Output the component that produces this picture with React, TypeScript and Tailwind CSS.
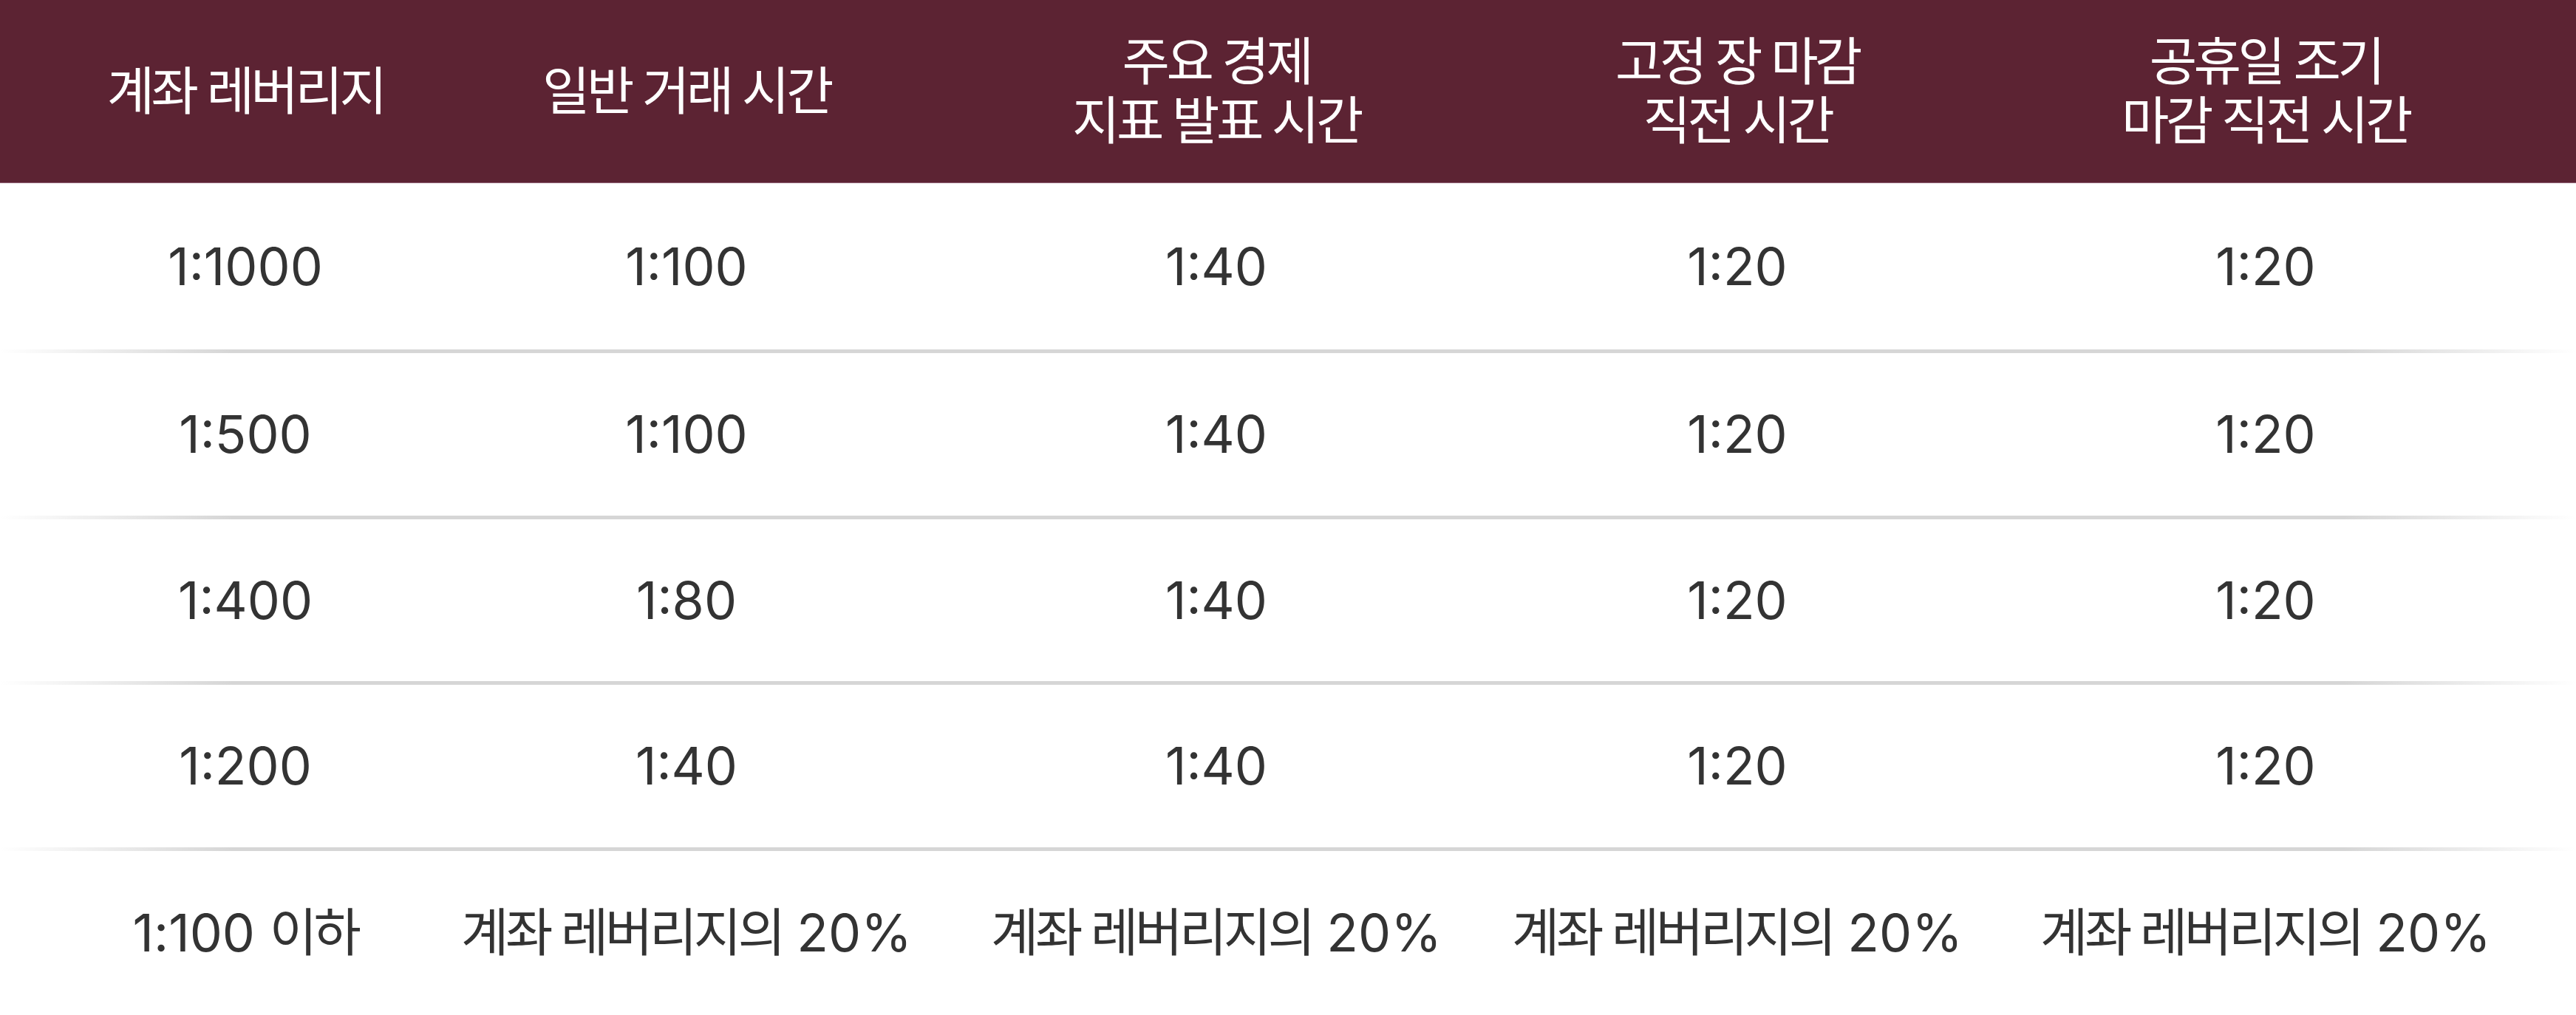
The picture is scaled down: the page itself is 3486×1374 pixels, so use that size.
import React from 'react'

// Hangul runs are set a little tighter than the Latin digits
function Txt({ text }: { text: string }) {
  const parts = text.split(/([가-힣]+(?: [가-힣]+)*)/)
  return (
    <>
      {parts.map((p, i) =>
        /[가-힣]/.test(p) ? (
          <span key={i} className="tracking-[-4.5px]">
            {p}
          </span>
        ) : (
          <React.Fragment key={i}>{p}</React.Fragment>
        ),
      )}
    </>
  )
}

const headers: string[][] = [
  ['계좌 레버리지'],
  ['일반 거래 시간'],
  ['주요 경제', '지표 발표 시간'],
  ['고정 장 마감', '직전 시간'],
  ['공휴일 조기', '마감 직전 시간'],
]

const rows: string[][] = [
  ['1:1000', '1:100', '1:40', '1:20', '1:20'],
  ['1:500', '1:100', '1:40', '1:20', '1:20'],
  ['1:400', '1:80', '1:40', '1:20', '1:20'],
  ['1:200', '1:40', '1:40', '1:20', '1:20'],
  ['1:100 이하', '계좌 레버리지의 20%', '계좌 레버리지의 20%', '계좌 레버리지의 20%', '계좌 레버리지의 20%'],
]

const rowHeights = ['h-[225px]', 'h-[220px]', 'h-[219px]', 'h-[220px]', 'h-[222px]']

const cols = 'grid grid-cols-[476px_718px_716px_694px_736px] pl-[94px] pr-[52px]'

export default function App() {
  return (
    <div className="w-[3486px] bg-white font-[Inter,'Noto_Sans_CJK_KR',sans-serif] text-[70px] leading-[80px]">
      {/* Header */}
      <div className={`${cols} h-[248px] items-center border-b border-[#94687a] bg-[#5c2333] text-white`}>
        {headers.map((lines, i) => (
          <div key={i} className="flex flex-col items-center whitespace-nowrap">
            {lines.map((l, j) => (
              <div key={j}>
                <Txt text={l} />
              </div>
            ))}
          </div>
        ))}
      </div>

      {/* Body */}
      {rows.map((row, r) => (
        <div key={r}>
          <div className={`${cols} ${rowHeights[r]} items-center text-[#333333]`}>
            {row.map((cell, c) => (
              <div key={c} className="text-center whitespace-nowrap">
                <Txt text={cell} />
              </div>
            ))}
          </div>
          {r < rows.length - 1 && (
            <div className="h-[5px] bg-[linear-gradient(90deg,rgba(214,214,214,0)_0%,#d6d6d6_9%,#d6d6d6_91%,rgba(214,214,214,0)_100%)]" />
          )}
        </div>
      ))}
    </div>
  )
}
